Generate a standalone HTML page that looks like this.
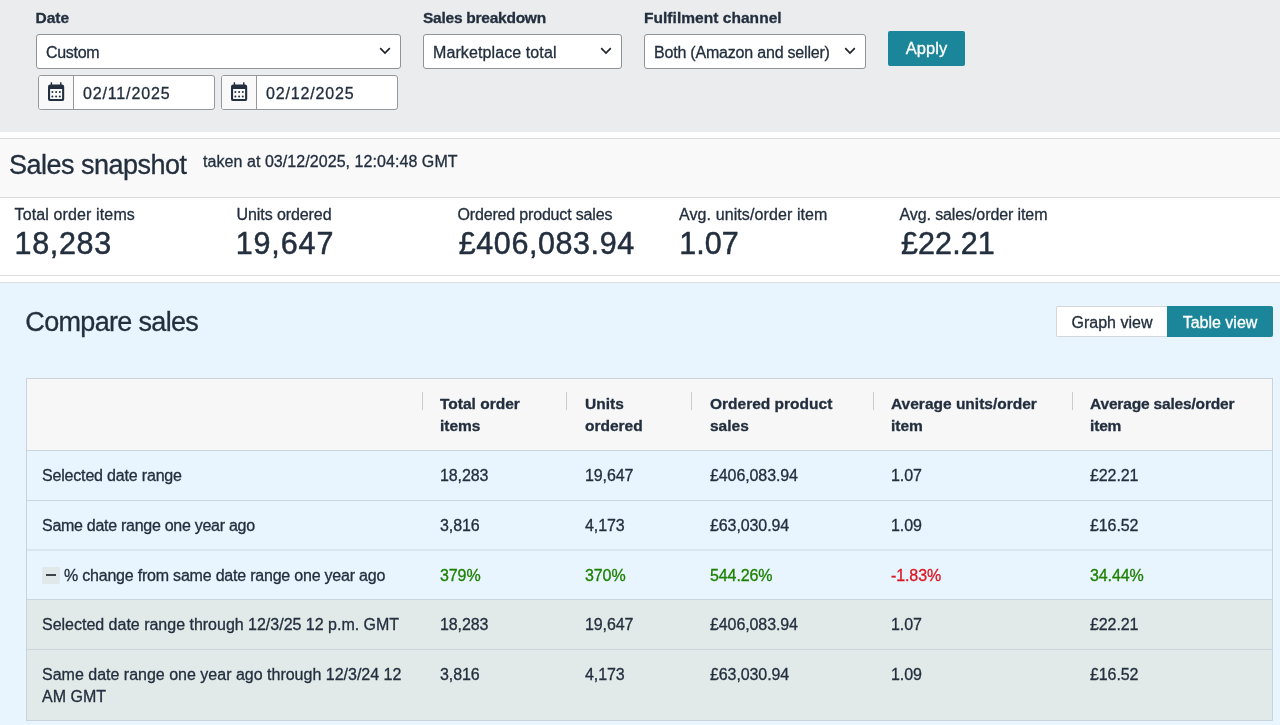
<!DOCTYPE html>
<html><head><meta charset="utf-8"><title>Sales dashboard</title>
<style>
*{box-sizing:border-box;margin:0;padding:0}
html,body{width:1280px;height:725px;overflow:hidden;background:#fff}
body{font-family:"Liberation Sans",sans-serif;color:#232f3e;position:relative;-webkit-text-stroke:0.3px}
.abs{position:absolute;white-space:nowrap}
#wrap{position:absolute;left:0;top:0;width:1280px;height:725px;will-change:transform;opacity:0.999}
.top{left:0;top:0;width:1280px;height:132px;background:#ebecee}
.lbl{font-weight:bold;font-size:15.5px;color:#232f3e}
.sel{background:#fff;border:1px solid #8f9297;border-radius:3px;font-size:16px;line-height:35px;padding-left:9px;height:35px;top:34px}
.chev{position:absolute;top:12.4px;right:9px;width:12px;height:8px}
.dt{background:#fff;border:1px solid #94979c;border-radius:3px;height:35px;top:75px;width:177px}
.dt .ic{position:absolute;left:0;top:0;width:35px;height:33px;background:#f9f9fa;border-right:1px solid #94979c;border-radius:2px 0 0 2px}
.dt .tx{position:absolute;left:44px;top:1px;line-height:33px;font-size:16px;letter-spacing:0.85px}
.btn{background:#1b8599;color:#fff;font-size:16.5px;-webkit-text-stroke:0.3px #fff;text-align:center;border-radius:2px}
.hline{left:0;width:1280px;height:1px;background:#dcdddf}
.kl{font-size:16px;top:206px}
.kv{font-size:30.5px;top:226px;letter-spacing:0.88px;-webkit-text-stroke:0.5px #232f3e}
.th{font-weight:bold;font-size:15.5px;line-height:22px}
.td{font-size:16px;line-height:22px}
.num{font-size:16px;letter-spacing:-0.1px}
.g{color:#1d8102}.r{color:#de1621}
</style></head><body>
<div id="wrap">
<div id="e1" class="abs top"></div>
<div id="e2" class="abs lbl" style="left:35.5px;top:8.5px">Date</div>
<div id="e3" class="abs lbl" style="left:423px;top:8.5px;letter-spacing:-0.25px">Sales breakdown</div>
<div id="e4" class="abs lbl" style="left:644px;top:8.5px;letter-spacing:0.04px">Fulfilment channel</div>
<div id="e5" class="abs sel" style="left:36px;width:365px;letter-spacing:-0.3px">Custom<svg class="chev" viewBox="0 0 12 8"><path d="M1.2 1.2 L6 6 L10.8 1.2" fill="none" stroke="#1e232b" stroke-width="1.65"/></svg></div>
<div id="e6" class="abs sel" style="left:423px;width:199px;letter-spacing:0.1px">Marketplace total<svg class="chev" viewBox="0 0 12 8"><path d="M1.2 1.2 L6 6 L10.8 1.2" fill="none" stroke="#1e232b" stroke-width="1.65"/></svg></div>
<div id="e7" class="abs sel" style="left:644px;width:222px;letter-spacing:-0.2px">Both (Amazon and seller)<svg class="chev" viewBox="0 0 12 8"><path d="M1.2 1.2 L6 6 L10.8 1.2" fill="none" stroke="#1e232b" stroke-width="1.65"/></svg></div>
<div id="e8" class="abs dt" style="left:38px"><div class="ic"><svg style="position:absolute;left:9px;top:6px" width="17" height="20" viewBox="0 0 17 20"><path fill="#232f3e" fill-rule="evenodd" d="M2.7 0.3h1.4v2.2h8V0.3h1.4v2.2H14a2.2 2.2 0 0 1 2.2 2.2V16.9A2.2 2.2 0 0 1 14 19.1H2.2a2.2 2.2 0 0 1-2.2-2.2V4.7A2.2 2.2 0 0 1 2.2 2.5h0.5zM2.1 7v9.8a0.3 0.3 0 0 0 0.3 0.3H13.8a0.3 0.3 0 0 0 0.3-0.3V7z"/><g fill="#232f3e"><circle cx="4.4" cy="9.9" r="1"/><circle cx="8.1" cy="9.9" r="1"/><circle cx="11.8" cy="9.9" r="1"/><circle cx="4.4" cy="14.4" r="1"/><circle cx="8.1" cy="14.4" r="1"/><circle cx="11.8" cy="14.4" r="1"/></g></svg></div><div class="tx">02/11/2025</div></div>
<div id="e9" class="abs dt" style="left:221px"><div class="ic"><svg style="position:absolute;left:9px;top:6px" width="17" height="20" viewBox="0 0 17 20"><path fill="#232f3e" fill-rule="evenodd" d="M2.7 0.3h1.4v2.2h8V0.3h1.4v2.2H14a2.2 2.2 0 0 1 2.2 2.2V16.9A2.2 2.2 0 0 1 14 19.1H2.2a2.2 2.2 0 0 1-2.2-2.2V4.7A2.2 2.2 0 0 1 2.2 2.5h0.5zM2.1 7v9.8a0.3 0.3 0 0 0 0.3 0.3H13.8a0.3 0.3 0 0 0 0.3-0.3V7z"/><g fill="#232f3e"><circle cx="4.4" cy="9.9" r="1"/><circle cx="8.1" cy="9.9" r="1"/><circle cx="11.8" cy="9.9" r="1"/><circle cx="4.4" cy="14.4" r="1"/><circle cx="8.1" cy="14.4" r="1"/><circle cx="11.8" cy="14.4" r="1"/></g></svg></div><div class="tx">02/12/2025</div></div>
<div id="e10" class="abs btn" style="left:888px;top:31px;width:77px;height:35px;line-height:35px">Apply</div>
<div id="e11" class="abs hline" style="top:138px"></div>
<div id="e12" class="abs" style="left:0;top:139px;width:1280px;height:58px;background:#f9f9fa"></div>
<div id="e13" class="abs hline" style="top:197px"></div>
<div id="e14" class="abs" style="left:9px;top:150px;font-size:27px;letter-spacing:-0.5px">Sales snapshot</div>
<div id="e15" class="abs" style="left:203px;top:153px;font-size:16px;letter-spacing:0.06px">taken at 03/12/2025, 12:04:48 GMT</div>
<div id="e16" class="abs kl" style="left:14.5px;letter-spacing:0.13px">Total order items</div>
<div id="e17" class="abs kv" style="left:14.5px;letter-spacing:0.68px">18,283</div>
<div id="e18" class="abs kl" style="left:236.5px;letter-spacing:-0.08px">Units ordered</div>
<div id="e19" class="abs kv" style="left:235.7px;letter-spacing:0.88px">19,647</div>
<div id="e20" class="abs kl" style="left:457.5px;letter-spacing:-0.17px">Ordered product sales</div>
<div id="e21" class="abs kv" style="left:458.75px;letter-spacing:0.58px">£406,083.94</div>
<div id="e22" class="abs kl" style="left:679.0px;letter-spacing:0.1px">Avg. units/order item</div>
<div id="e23" class="abs kv" style="left:679.2px;letter-spacing:0.08px">1.07</div>
<div id="e24" class="abs kl" style="left:899.5px;letter-spacing:-0.1px">Avg. sales/order item</div>
<div id="e25" class="abs kv" style="left:901px;letter-spacing:0.08px">£22.21</div>
<div id="e26" class="abs hline" style="top:275px"></div>
<div id="e27" class="abs hline" style="top:282px"></div>
<div id="e28" class="abs" style="left:0;top:283px;width:1280px;height:442px;background:#e8f5fe"></div>
<div id="e29" class="abs" style="left:25.3px;top:307px;font-size:27px;letter-spacing:-0.67px">Compare sales</div>
<div id="e30" class="abs" style="left:1056px;top:306px;width:111px;height:31px;background:#fff;border:1px solid #d3d7da;border-right:none;border-radius:2px 0 0 2px;font-size:16px;line-height:31px;text-align:center">Graph view</div>
<div id="e31" class="abs" style="left:1167px;top:306px;width:106px;height:31px;background:#1b8599;color:#fff;border-radius:0 2px 2px 0;font-size:16px;line-height:33px;text-align:center;-webkit-text-stroke:0.3px #fff">Table view</div>
<div id="e32" class="abs" style="left:26px;top:378px;width:1247px;height:343px;border:1px solid #cbd3da"></div>
<div id="e33" class="abs" style="left:27px;top:379px;width:1245px;height:71px;background:#f7f7f8"></div>
<div id="e34" class="abs" style="left:27px;top:600px;width:1245px;height:120px;background:#e2eae9"></div>
<div id="e35" class="abs" style="left:27px;top:450px;width:1245px;height:1px;background:#cbd6de"></div>
<div id="e36" class="abs" style="left:27px;top:500px;width:1245px;height:1px;background:#cbd6de"></div>
<div id="e37" class="abs" style="left:27px;top:549px;width:1245px;height:2px;background:#dae5ed"></div>
<div id="e38" class="abs" style="left:27px;top:599px;width:1245px;height:1px;background:#cbd6de"></div>
<div id="e39" class="abs" style="left:27px;top:649px;width:1245px;height:1px;background:#cbd6de"></div>
<div id="e40" class="abs" style="left:422px;top:392px;width:1px;height:18px;background:#c9cccf"></div>
<div id="e41" class="abs" style="left:566px;top:392px;width:1px;height:18px;background:#c9cccf"></div>
<div id="e42" class="abs" style="left:691px;top:392px;width:1px;height:18px;background:#c9cccf"></div>
<div id="e43" class="abs" style="left:873px;top:392px;width:1px;height:18px;background:#c9cccf"></div>
<div id="e44" class="abs" style="left:1072px;top:392px;width:1px;height:18px;background:#c9cccf"></div>
<div id="e45" class="abs th" style="left:440px;top:393px">Total order<br>items</div>
<div id="e46" class="abs th" style="left:585px;top:393px">Units<br>ordered</div>
<div id="e47" class="abs th" style="left:710px;top:393px">Ordered product<br>sales</div>
<div id="e48" class="abs th" style="left:891px;top:393px">Average units/order<br>item</div>
<div id="e49" class="abs th" style="left:1090px;top:393px;letter-spacing:-0.17px">Average sales/order<br>item</div>
<div id="e50" class="abs td" style="left:42px;top:465px;letter-spacing:-0.18px">Selected date range</div>
<div id="e51" class="abs td num" style="left:440px;top:465px">18,283</div>
<div id="e52" class="abs td num" style="left:585px;top:465px">19,647</div>
<div id="e53" class="abs td num" style="left:710px;top:465px">£406,083.94</div>
<div id="e54" class="abs td num" style="left:891px;top:465px">1.07</div>
<div id="e55" class="abs td num" style="left:1090px;top:465px">£22.21</div>
<div id="e56" class="abs td" style="left:42px;top:515px;letter-spacing:-0.28px">Same date range one year ago</div>
<div id="e57" class="abs td num" style="left:440px;top:515px">3,816</div>
<div id="e58" class="abs td num" style="left:585px;top:515px">4,173</div>
<div id="e59" class="abs td num" style="left:710px;top:515px">£63,030.94</div>
<div id="e60" class="abs td num" style="left:891px;top:515px">1.09</div>
<div id="e61" class="abs td num" style="left:1090px;top:515px">£16.52</div>
<div id="e62" class="abs" style="left:42px;top:567px;width:18px;height:17px;background:#e0e8ea;border-radius:2px"><div style="position:absolute;left:3.5px;top:7px;width:10.5px;height:2px;background:#3b434b"></div></div>
<div id="e63" class="abs td" style="left:64px;top:565px;letter-spacing:-0.21px">% change from same date range one year ago</div>
<div id="e64" class="abs td num g" style="left:440px;top:565px">379%</div>
<div id="e65" class="abs td num g" style="left:585px;top:565px">370%</div>
<div id="e66" class="abs td num g" style="left:710px;top:565px">544.26%</div>
<div id="e67" class="abs td num r" style="left:891px;top:565px">-1.83%</div>
<div id="e68" class="abs td num g" style="left:1090px;top:565px">34.44%</div>
<div id="e69" class="abs td" style="left:42px;top:614px;letter-spacing:-0.01px">Selected date range through 12/3/25 12 p.m. GMT</div>
<div id="e70" class="abs td num" style="left:440px;top:614px">18,283</div>
<div id="e71" class="abs td num" style="left:585px;top:614px">19,647</div>
<div id="e72" class="abs td num" style="left:710px;top:614px">£406,083.94</div>
<div id="e73" class="abs td num" style="left:891px;top:614px">1.07</div>
<div id="e74" class="abs td num" style="left:1090px;top:614px">£22.21</div>
<div id="e75" class="abs td" style="left:42px;top:664px;letter-spacing:0px">Same date range one year ago through 12/3/24 12<br>AM GMT</div>
<div id="e76" class="abs td num" style="left:440px;top:664px">3,816</div>
<div id="e77" class="abs td num" style="left:585px;top:664px">4,173</div>
<div id="e78" class="abs td num" style="left:710px;top:664px">£63,030.94</div>
<div id="e79" class="abs td num" style="left:891px;top:664px">1.09</div>
<div id="e80" class="abs td num" style="left:1090px;top:664px">£16.52</div>
</div>
</body></html>
